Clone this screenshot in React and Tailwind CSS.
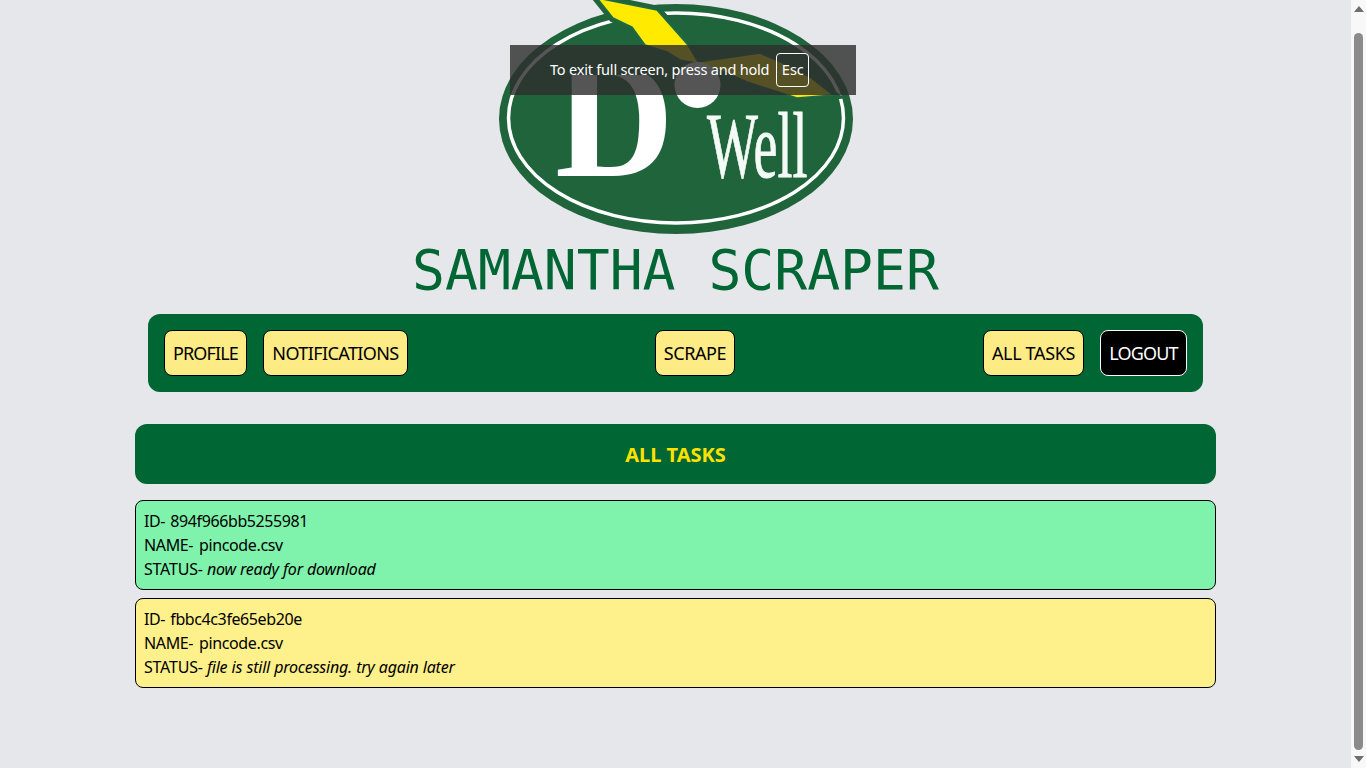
const ui = { fontFamily: '"Noto Sans", "Open Sans", sans-serif' };

function Logo() {
  return (
    <svg viewBox="496 0 360 240" className="block w-[360px] h-[240px] shrink-0">
      <defs>
        <clipPath id="dclip">
          <rect x="540" y="75" width="140" height="110" />
        </clipPath>
      </defs>
      <ellipse cx="676" cy="119" rx="177" ry="115" fill="#20643c" />
      <ellipse cx="676" cy="118" rx="167.5" ry="105" fill="none" stroke="#ffffff" strokeWidth="3.5" />
      <polygon points="597,-2 657,10 688,45 698,62 760,53 783,63 810,77 833,95 797,98 747,82 720,70 695,63 680,60 667,52 645,45 632,27 613,18" fill="#20643c" stroke="#20643c" strokeWidth="9" />
      <polygon points="597,-2 657,10 688,45 698,62 760,53 783,63 810,77 833,95 797,98 747,82 720,70 695,63 680,60 667,52 645,45 632,27 613,18" fill="#ffea00" stroke="#1c6a4e" strokeWidth="1.5" />
      <g clipPath="url(#dclip)">
        <text transform="translate(555 176) scale(.97 1)" fontFamily="Liberation Serif" fontWeight="700" fontSize="170" fill="#ffffff">D</text>
      </g>
      <circle cx="697.5" cy="85" r="23" fill="#ffffff" />
      <text transform="translate(707 176.5) scale(.58 1)" fontFamily="Liberation Serif" fontSize="93" fill="#f4fbf6" stroke="#f4fbf6" strokeWidth="0.9">Well</text>
    </svg>
  );
}

function NavButton({ children, className }) {
  return (
    <button className={`h-[46px] rounded-lg border border-black bg-[#fdeb86] text-black text-[18px] whitespace-nowrap ${className}`}>
      {children}
    </button>
  );
}

function Task({ id, status, className }) {
  return (
    <div className={`h-[90px] rounded-lg border border-black px-2 py-2 text-base leading-6 text-black ${className}`}>
      <p className="tracking-[-0.4px] [word-spacing:1.5px]">ID- {id}</p>
      <p className="tracking-[-0.36px] [word-spacing:2px]">NAME- pincode.csv</p>
      <p className="tracking-[-0.22px] [word-spacing:0.3px]">STATUS- <em>{status}</em></p>
    </div>
  );
}

function Scrollbar() {
  return (
    <aside className="w-[15px] shrink-0 flex flex-col items-center bg-[#f8f8f8]">
      <svg viewBox="0 0 10 6" className="w-[10px] h-[6px] mt-[6px] shrink-0">
        <polygon points="5,0 10,6 0,6" fill="#6e6e6e" />
      </svg>
      <div className="w-[9px] h-[717px] mt-[21px] rounded-full bg-[#8b8b8b]" />
      <svg viewBox="0 0 10 6" className="w-[10px] h-[6px] mt-[6px] shrink-0">
        <polygon points="0,0 10,0 5,6" fill="#6e6e6e" />
      </svg>
    </aside>
  );
}

export default function App() {
  return (
    <div className="relative flex h-screen overflow-hidden bg-[#e5e7eb]" style={ui}>
      <main className="flex-1 min-w-0 flex flex-col items-center">
        <Logo />
        <h1 className="h-[60px] text-[54.7px] leading-[60px] text-[#006633] whitespace-pre" style={{ fontFamily: '"DejaVu Sans Mono", monospace' }}>
          SAMANTHA SCRAPER
        </h1>
        <nav className="mt-[14px] w-[1055px] h-[78px] rounded-xl bg-[#006633] p-4 flex items-center justify-between">
          <div className="flex gap-4">
            <NavButton className="w-[83px] tracking-[-0.85px]">PROFILE</NavButton>
            <NavButton className="w-[145px] tracking-[-0.6px]">NOTIFICATIONS</NavButton>
          </div>
          <NavButton className="w-[80px] mr-[1px] tracking-[-0.4px]">SCRAPE</NavButton>
          <div className="flex gap-4">
            <NavButton className="w-[101px] tracking-[-0.35px]">ALL TASKS</NavButton>
            <button className="h-[46px] w-[87px] rounded-lg border border-white bg-black text-white text-[18px] tracking-[-0.8px]">LOGOUT</button>
          </div>
        </nav>
        <section className="mt-8 w-[1081px] flex flex-col">
          <h2 className="h-[60px] pt-[2px] rounded-xl bg-[#006633] flex items-center justify-center text-xl font-bold text-[#fde100]">
            ALL TASKS
          </h2>
          <div className="mt-4 flex flex-col gap-2">
            <Task id="894f966bb5255981" status="now ready for download" className="bg-[#7ff2ab]" />
            <Task id="fbbc4c3fe65eb20e" status="file is still processing. try again later" className="bg-[#fef08a]" />
          </div>
        </section>
      </main>
      <Scrollbar />
      <div className="absolute left-[510px] top-[45px] w-[346px] h-[50px] bg-[rgba(45,45,45,0.81)] flex items-center pl-10 gap-[7px] text-white text-[14.5px]">
        <span className="whitespace-nowrap tracking-[-0.2px]">To exit full screen, press and hold</span>
        <span className="w-[33px] h-[34px] rounded-sm border border-white flex items-center justify-center">Esc</span>
      </div>
    </div>
  );
}
